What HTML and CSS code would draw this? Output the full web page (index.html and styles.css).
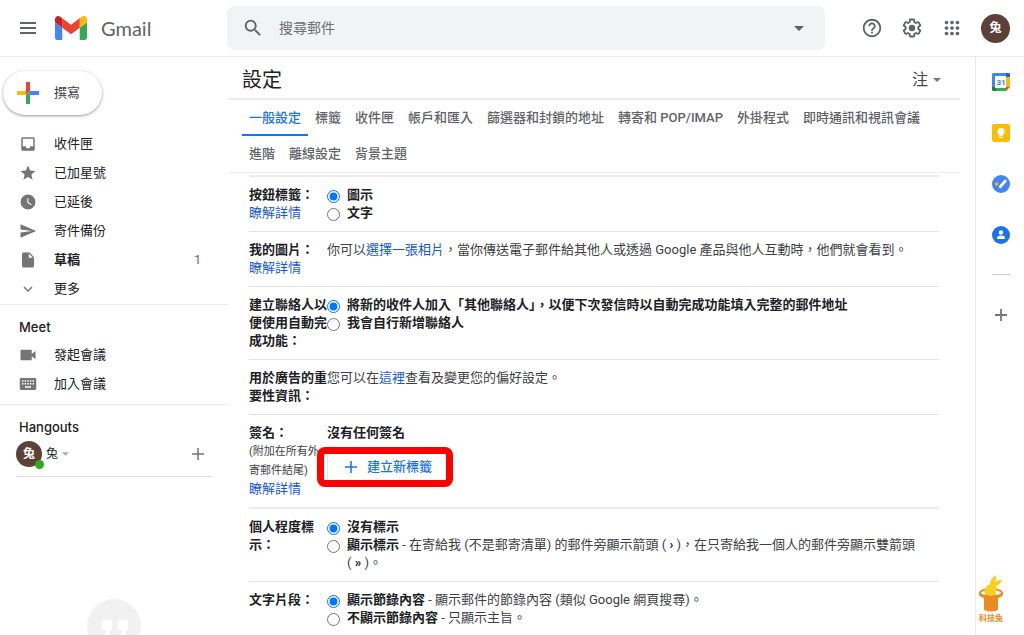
FILE: index.html
```html
<!DOCTYPE html>
<html lang="zh-Hant">
<head>
<meta charset="utf-8">
<meta name="viewport" content="width=device-width, initial-scale=1">
<title>Gmail 設定</title>
<link rel="stylesheet" href="styles.css">
</head>
<body>
<header class="topbar">
  <div class="brand">
    <button class="icon-btn" aria-label="主選單"><svg width="18" height="14" viewBox="0 0 18 14" fill="none" stroke="#5f6368" stroke-width="2"><path d="M1 2h16M1 7h16M1 12h16"/></svg></button>
    <a class="logo" href="#">
      <svg width="32" height="24" viewBox="52 42 88 66" aria-hidden="true"><path fill="#4285f4" d="M58 108h14V74L52 59v43c0 3.320 2.690 6 6 6"/><path fill="#34a853" d="M120 108h14c3.320 0 6-2.690 6-6V59l-20 15"/><path fill="#fbbc04" d="M120 48v26l20-15v-8c0-7.420-8.470-11.650-14.400-7.200"/><path fill="#ea4335" d="M72 74V48l24 18 24-18v26L96 92"/><path fill="#c5221f" d="M52 51v8l20 15V48l-5.600-4.200c-5.940-4.450-14.400-.220-14.400 7.200"/></svg>
      <span>Gmail</span>
    </a>
  </div>
  <form class="search" role="search">
    <button class="icon-btn" type="button" aria-label="搜尋"><svg width="22" height="22" viewBox="0 0 24 24" fill="#5f6368"><path d="M15.500 14h-.790l-.280-.270A6.470 6.470 0 0 0 16 9.500 6.500 6.500 0 1 0 9.500 16c1.610 0 3.090-.590 4.230-1.570l.270.280v.790l5 4.990L20.490 19l-4.990-5zm-6 0C7.010 14 5 11.990 5 9.500S7.010 5 9.500 5 14 7.010 14 9.500 11.990 14 9.500 14z"/></svg></button>
    <input type="text" placeholder="搜尋郵件" aria-label="搜尋郵件">
    <button class="icon-btn" type="button" aria-label="顯示搜尋選項"><svg width="10" height="5" viewBox="0 0 10 5" fill="#5f6368"><path d="M0 0h10L5 5z"/></svg></button>
  </form>
  <div class="tools">
    <button class="icon-btn" aria-label="說明"><svg width="22" height="22" viewBox="0 0 24 24" fill="#5f6368"><path d="M11 18h2v-2h-2v2zm1-16C6.480 2 2 6.480 2 12s4.480 10 10 10 10-4.480 10-10S17.520 2 12 2zm0 18c-4.410 0-8-3.590-8-8s3.590-8 8-8 8 3.590 8 8-3.590 8-8 8zm0-14c-2.210 0-4 1.790-4 4h2c0-1.100.900-2 2-2s2 .900 2 2c0 2-3 1.750-3 5h2c0-2.250 3-2.500 3-5 0-2.210-1.790-4-4-4z"/></svg></button>
    <button class="icon-btn" aria-label="設定"><svg width="22" height="22" viewBox="0 0 24 24" fill="#5f6368"><path d="M13.850 22.250h-3.700c-.740 0-1.360-.540-1.450-1.270l-.270-1.890c-.270-.140-.530-.290-.790-.460l-1.800.720c-.700.260-1.470-.030-1.810-.650L2.200 15.530c-.350-.660-.200-1.440.360-1.880l1.530-1.190c-.010-.150-.020-.300-.020-.460 0-.150.010-.310.020-.460l-1.520-1.190c-.590-.450-.740-1.260-.370-1.880l1.850-3.190c.340-.620 1.110-.900 1.790-.630l1.810.730c.260-.170.520-.320.780-.460l.270-1.910c.090-.700.710-1.250 1.440-1.250h3.700c.740 0 1.360.540 1.450 1.270l.270 1.890c.270.140.530.290.790.460l1.800-.720c.710-.260 1.480.030 1.820.650l1.840 3.180c.360.660.200 1.440-.360 1.880l-1.520 1.190c.010.150.020.300.020.460s-.010.310-.020.460l1.520 1.190c.560.450.720 1.230.370 1.860l-1.860 3.220c-.340.620-1.110.900-1.800.630l-1.800-.720c-.260.170-.520.320-.780.460l-.270 1.910c-.100.680-.720 1.220-1.460 1.220zm-3.230-2h2.760l.370-2.550.530-.220c.440-.180.880-.440 1.340-.780l.450-.340 2.380.960 1.380-2.400-2.030-1.580.070-.560c.030-.260.060-.510.060-.780s-.030-.530-.060-.780l-.070-.560 2.030-1.580-1.390-2.400-2.390.960-.450-.350c-.420-.320-.870-.580-1.330-.770l-.520-.220-.370-2.550h-2.760l-.370 2.550-.530.210c-.440.190-.880.440-1.340.790l-.450.330-2.380-.950-1.390 2.390 2.030 1.580-.070.560a7 7 0 0 0-.060.790c0 .260.020.530.060.780l.070.560-2.030 1.580 1.380 2.400 2.390-.960.450.350c.430.330.860.580 1.330.770l.530.220z"/><circle cx="12" cy="12" r="3.500"/></svg></button>
    <button class="icon-btn" aria-label="Google 應用程式"><svg width="22" height="22" viewBox="0 0 24 24" fill="#5f6368"><path d="M6 8c1.100 0 2-.900 2-2s-.900-2-2-2-2 .900-2 2 .900 2 2 2zm6 12c1.100 0 2-.900 2-2s-.900-2-2-2-2 .900-2 2 .900 2 2 2zm-6 0c1.100 0 2-.900 2-2s-.900-2-2-2-2 .900-2 2 .900 2 2 2zm0-6c1.100 0 2-.900 2-2s-.900-2-2-2-2 .900-2 2 .900 2 2 2zm6 0c1.100 0 2-.900 2-2s-.900-2-2-2-2 .900-2 2 .900 2 2 2zm4-8c0 1.100.900 2 2 2s2-.900 2-2-.900-2-2-2-2 .900-2 2zm-4 2c1.100 0 2-.900 2-2s-.900-2-2-2-2 .900-2 2 .900 2 2 2zm6 6c1.100 0 2-.900 2-2s-.900-2-2-2-2 .900-2 2 .900 2 2 2zm0 6c1.100 0 2-.900 2-2s-.900-2-2-2-2 .900-2 2 .900 2 2 2z"/></svg></button>
    <button class="avatar" aria-label="帳戶">兔</button>
  </div>
</header>

<div class="body">
  <nav class="sidebar">
    <button class="compose"><svg width="22" height="22" viewBox="0 0 22 22"><path fill="#ea4335" d="M9 0h4v9l-4 4z"/><path fill="#fbbc04" d="M0 9h9v4H0z"/><path fill="#4285f4" d="M13 9h9v4h-9l-2-2z"/><path fill="#34a853" d="M9 13l2-2 2 2v9H9z"/></svg>撰寫</button>
    <ul class="nav-list">
      <li><a href="#"><svg viewBox="0 0 24 24"><path d="M19 3H5c-1.100 0-2 .900-2 2v14c0 1.100.900 2 2 2h14c1.100 0 2-.900 2-2V5c0-1.100-.900-2-2-2zm0 12h-4c0 1.660-1.350 3-3 3s-3-1.340-3-3H5V5h14v10z"/></svg>收件匣</a></li>
      <li><a href="#"><svg viewBox="0 0 24 24"><path d="M12 17.270 18.180 21l-1.640-7.030L22 9.240l-7.190-.610L12 2 9.190 8.630 2 9.240l5.460 4.730L5.820 21z"/></svg>已加星號</a></li>
      <li><a href="#"><svg viewBox="0 0 24 24"><path fill-rule="evenodd" d="M12 2a10 10 0 1 0 0 20 10 10 0 0 0 0-20zm4.200 14.200L11 13V7h1.500v5.200l4.500 2.700-.800 1.300z"/></svg>已延後</a></li>
      <li><a href="#"><svg viewBox="0 0 24 24"><path d="M2 21 23 12 2 3v7l15 2-15 2z"/></svg>寄件備份</a></li>
      <li><a href="#" class="unread"><svg viewBox="0 0 24 24"><path d="M14 2H6c-1.100 0-2 .900-2 2v16c0 1.100.900 2 2 2h12c1.100 0 2-.900 2-2V8l-6-6zm-1 7V3.500L18.500 9H13z"/></svg>草稿<span class="count">1</span></a></li>
      <li><a href="#"><svg viewBox="0 0 24 24"><path d="m12 16-6-6 1.400-1.400 4.600 4.600 4.600-4.600L18 10z"/></svg>更多</a></li>
    </ul>
    <section class="group">
      <h2>Meet</h2>
      <ul class="nav-list">
        <li><a href="#"><svg viewBox="0 0 24 24"><path d="M17 10.500V6c0-.550-.450-1-1-1H3c-.550 0-1 .450-1 1v12c0 .550.450 1 1 1h13c.550 0 1-.450 1-1v-4.500l5 4v-11l-5 4z"/></svg>發起會議</a></li>
        <li><a href="#"><svg viewBox="0 0 24 24"><path fill-rule="evenodd" d="M21 4H3c-1.100 0-2 .900-2 2v12c0 1.100.900 2 2 2h18c1.100 0 2-.900 2-2V6c0-1.100-.900-2-2-2zM4 7h2v2H4zm3.500 0h2v2h-2zM11 7h2v2h-2zm3.500 0h2v2h-2zM18 7h2v2h-2zM4 10.500h2v2H4zm3.500 0h2v2h-2zm3.500 0h2v2h-2zm3.500 0h2v2h-2zm3.500 0h2v2h-2zM8 15h8v2H8z"/></svg>加入會議</a></li>
      </ul>
    </section>
    <section class="group">
      <h2>Hangouts</h2>
      <div class="chat-user">
        <span class="avatar avatar-small">兔<i class="presence"></i></span>
        <button class="chat-name">兔<svg width="7" height="4" viewBox="0 0 10 5" fill="#aaa"><path d="M0 0h10L5 5z"/></svg></button>
        <button class="icon-btn" aria-label="新對話"><svg width="12" height="12" viewBox="0 0 12 12" fill="none" stroke="#777" stroke-width="1.500"><path d="M6 0v12M0 6h12"/></svg></button>
      </div>
      <svg class="empty-chat" width="54" height="54" viewBox="0 0 54 54"><circle cx="27" cy="27" r="27" fill="#f1f1f1"/><path fill="#fff" d="M15 21h10v9l-4 7h-4l3-6h-5zM31 21h10v9l-4 7h-4l3-6h-5z"/></svg>
    </section>
  </nav>

  <main class="settings">
    <div class="title-row">
      <h1>設定</h1>
      <button class="input-tool">注<svg width="8" height="4" viewBox="0 0 10 5" fill="#777"><path d="M0 0h10L5 5z"/></svg></button>
    </div>
    <nav class="tabs">
      <a class="active" href="#">一般設定</a><a href="#">標籤</a><a href="#">收件匣</a><a href="#">帳戶和匯入</a><a href="#">篩選器和封鎖的地址</a><a href="#">轉寄和 POP/IMAP</a><a href="#">外掛程式</a><a href="#">即時通訊和視訊會議</a><a href="#">進階</a><a href="#">離線設定</a><a href="#">背景主題</a>
    </nav>
    <form class="options">
      <section class="row">
        <div class="name"><b>按鈕標籤：</b><a href="#">瞭解詳情</a></div>
        <div>
          <label class="choice"><input type="radio" name="labels" checked><span><b>圖示</b></span></label>
          <label class="choice"><input type="radio" name="labels"><span><b>文字</b></span></label>
        </div>
      </section>
      <section class="row">
        <div class="name"><b>我的圖片：</b><a href="#">瞭解詳情</a></div>
        <div>你可以<a href="#">選擇一張相片</a>，當你傳送電子郵件給其他人或透過 Google 產品與他人互動時，他們就會看到。</div>
      </section>
      <section class="row">
        <div class="name"><b>建立聯絡人以便使用自動完成功能：</b></div>
        <div>
          <label class="choice"><input type="radio" name="contacts" checked><span><b>將新的收件人加入「其他聯絡人」，以便下次發信時以自動完成功能填入完整的郵件地址</b></span></label>
          <label class="choice"><input type="radio" name="contacts"><span><b>我會自行新增聯絡人</b></span></label>
        </div>
      </section>
      <section class="row">
        <div class="name"><b>用於廣告的重要性資訊：</b></div>
        <div>您可以在<a href="#">這裡</a>查看及變更您的偏好設定。</div>
      </section>
      <section class="row row-thick">
        <div class="name"><b>簽名：</b><small>(附加在所有外寄郵件結尾)</small><a href="#">瞭解詳情</a></div>
        <div>
          <b>沒有任何簽名</b>
          <div class="create">
            <button type="button"><svg width="12" height="12" viewBox="0 0 12 12" fill="none" stroke="#1a73e8" stroke-width="1.500"><path d="M6 0v12M0 6h12"/></svg>建立新標籤</button>
            <span class="highlight"></span>
          </div>
        </div>
      </section>
      <section class="row">
        <div class="name"><b>個人程度標示：</b></div>
        <div>
          <label class="choice"><input type="radio" name="level" checked><span><b>沒有標示</b></span></label>
          <label class="choice"><input type="radio" name="level"><span><b>顯示標示</b> - 在寄給我 (不是郵寄清單) 的郵件旁顯示箭頭 ( <b>›</b> )，在只寄給我一個人的郵件旁顯示雙箭頭 <span class="keep">( <b>»</b> )。</span></span></label>
        </div>
      </section>
      <section class="row">
        <div class="name"><b>文字片段：</b></div>
        <div>
          <label class="choice"><input type="radio" name="snippet" checked><span><b>顯示節錄內容</b> - 顯示郵件的節錄內容 (類似 Google 網頁搜尋)。</span></label>
          <label class="choice"><input type="radio" name="snippet"><span><b>不顯示節錄內容</b> - 只顯示主旨。</span></label>
        </div>
      </section>
    </form>
  </main>

  <aside class="addons">
    <a href="#" aria-label="日曆"><svg width="18" height="18" viewBox="0 0 18 18"><path fill="#4285f4" d="M1 0h13v4H4v10H0V1z"/><path fill="#1967d2" d="M14 0h3l1 1v3h-4z"/><path fill="#fbbc04" d="M14 4h4v10h-4z"/><path fill="#34a853" d="M4 14h10v4H4z"/><path fill="#188038" d="M0 14h4v4H1l-1-1z"/><path fill="#ea4335" d="M14 14h4l-4 4z"/><path fill="#fff" d="M3 3h11v12H3z"/><text x="9" y="12" text-anchor="middle" class="cal-day">31</text></svg></a>
    <a href="#" aria-label="Keep"><svg width="18" height="18" viewBox="0 0 18 18"><rect width="18" height="18" rx="2" fill="#fbbc04"/><circle cx="9" cy="7.500" r="3.500" fill="#fff"/><path fill="#fff" d="M7 10h4v2H7zM7 12.700h4V14H7z"/></svg></a>
    <a href="#" aria-label="Tasks"><svg width="18" height="18" viewBox="0 0 18 18"><circle cx="9" cy="9" r="9" fill="#4285f4"/><path d="m8.200 11.800 5-5.800" stroke="#fff" stroke-width="2.800" stroke-linecap="round"/><circle cx="4.700" cy="9" r="1.800" fill="#fbbc04"/></svg></a>
    <a href="#" aria-label="聯絡人"><svg width="18" height="18" viewBox="0 0 18 18"><circle cx="9" cy="9" r="9" fill="#1a73e8"/><circle cx="9" cy="6.500" r="2.200" fill="#fff"/><path fill="#fff" d="M5 13v-1.200c0-1.600 2-2.300 4-2.300s4 .700 4 2.300V13z"/></svg></a>
    <hr>
    <button class="icon-btn" aria-label="取得外掛程式"><svg width="12" height="12" viewBox="0 0 12 12" fill="none" stroke="#777" stroke-width="1.800"><path d="M6 0v12M0 6h12"/></svg></button>
  </aside>
</div>

<div class="watermark">
  <svg width="26" height="38" viewBox="0 0 26 38"><ellipse cx="13" cy="18" rx="11" ry="4" fill="#fff" stroke="#e98a24" stroke-width="2"/><path fill="#e98a24" d="M6 20h14v15q-7 3-14 0z"/><path fill="#f8cf1c" d="M7 20c-1-7 1-9 5-11 0-4 3-7 6-9 0 3 0 5-1 7 2-2 4-2 7-2-1 3-3 5-6 6 2 3 0 5-1 5l2 4q-6 2-12 0z"/><path fill="#e98a24" d="M1 18q12 6 24 0v2q-2 3-6 3H7q-4 0-6-3z"/></svg>
  <span>科技兔</span>
</div>
</body>
</html>
```

FILE: styles.css
```css
* { box-sizing: border-box; }

body {
  margin: 0;
  height: 100vh;
  overflow: hidden;
  display: flex;
  flex-direction: column;
  background: #fff;
  color: #202124;
  font: 13px/18px Roboto, "Noto Sans CJK TC", sans-serif;
}

a { color: #1558d6; text-decoration: none; }
b { font-weight: 700; }
h1, h2, ul { margin: 0; padding: 0; }
ul { list-style: none; }
svg { display: block; flex: none; }

button {
  border: 0;
  padding: 0;
  background: none;
  color: inherit;
  font: inherit;
  cursor: pointer;
}

.icon-btn { display: flex; align-items: center; justify-content: center; }

/* Top bar */
.topbar {
  flex: none;
  display: flex;
  align-items: center;
  height: 57px;
  border-bottom: 1px solid #e8eaed;
}
.brand { flex: none; width: 227px; display: flex; align-items: center; gap: 18px; padding-left: 19px; }
.logo { display: flex; align-items: center; gap: 14px; color: #5f6368; font: 20px/24px Lato, sans-serif; }
.search {
  flex: 1;
  max-width: 598px;
  height: 44px;
  display: flex;
  align-items: center;
  gap: 15px;
  padding: 0 21px 0 15px;
  border-radius: 7px;
  background: #f1f3f4;
}
.search input {
  flex: 1;
  min-width: 0;
  padding: 0;
  border: 0;
  outline: 0;
  background: none;
  color: #202124;
  font: 14px/20px Roboto, "Noto Sans CJK TC", sans-serif;
}
.search input::placeholder { color: #6b6f73; opacity: 1; }
.tools { margin-left: auto; display: flex; align-items: center; gap: 18px; padding-right: 14px; }
.avatar {
  position: relative;
  display: flex;
  align-items: center;
  justify-content: center;
  width: 29px;
  height: 29px;
  border-radius: 50%;
  background: #5d4037;
  color: #fff;
  font-size: 12px;
  font-weight: 700;
}

.body { flex: 1; min-height: 0; display: flex; }

/* Left navigation */
.sidebar { flex: none; width: 228px; overflow: hidden; }
.compose {
  display: flex;
  align-items: center;
  gap: 15px;
  height: 44px;
  margin: 14px 0 14px 3px;
  padding: 0 22px 0 14px;
  border-radius: 22px;
  box-shadow: 0 1px 2px rgba(60, 64, 67, .35), 0 1px 3px 1px rgba(60, 64, 67, .15);
  color: #3c4043;
}
.nav-list { padding-bottom: 1px; }
.nav-list a {
  display: flex;
  align-items: center;
  gap: 17px;
  height: 29px;
  padding: 0 27px 0 19px;
  color: #202124;
}
.nav-list svg { width: 18px; height: 18px; fill: #757575; }
.nav-list .unread { font-weight: 700; }
.count { margin-left: auto; font-size: 12px; font-weight: 400; color: #5f6368; }
.group { margin-bottom: 5px; border-top: 1px solid #e8eaed; padding-top: 13px; }
.group h2 {
  padding: 0 19px;
  margin-bottom: 4px;
  font: 500 13px/18px Inter, sans-serif;
}
.chat-user {
  display: flex;
  align-items: center;
  gap: 4px;
  height: 37px;
  margin: 0 15px 0 16px;
  padding: 0 9px 9px 0;
  border-bottom: 1px solid #e0e0e0;
}
.chat-user .icon-btn { margin-left: auto; }
.avatar-small { width: 26px; height: 26px; }
.presence {
  position: absolute;
  right: -2px;
  bottom: -2px;
  width: 9px;
  height: 9px;
  border-radius: 50%;
  background: #34a81c;
}
.chat-name { display: flex; align-items: center; gap: 4px; font-size: 12px; }
.empty-chat { margin: 122px auto 0; }

/* Settings */
.settings { flex: 1; min-width: 0; overflow: hidden; padding-right: 15px; }
.title-row {
  display: flex;
  align-items: center;
  justify-content: space-between;
  height: 43px;
  padding: 4px 19px 0 14px;
  border-bottom: 2px solid #ededed;
}
h1 { font-size: 20px; line-height: 28px; font-weight: 400; }
.input-tool { display: flex; align-items: center; gap: 5px; font-size: 16px; line-height: 24px; color: #444; }
.tabs { display: flex; flex-wrap: wrap; padding: 0 14px; border-bottom: 1px solid #ececec; }
.tabs a {
  height: 36px;
  padding: 0 7px;
  line-height: 36px;
  border-bottom: 2px solid transparent;
  color: #5f6368;
  font-weight: 500;
}
.tabs .active { color: #1a73e8; border-color: #1a73e8; }
.options { margin: 2px 21px 0; border-top: 2px solid #ececec; color: #3c4043; }
.options b { color: #202124; }
.row {
  display: grid;
  grid-template-columns: 78px 1fr;
  padding: 9px 0;
  border-bottom: 1px solid #e4e4e4;
}
.row-thick { border-bottom: 2px solid #ececec; }
.name b, .name small, .name a { display: block; }
.name small { font-size: 11px; line-height: 19px; }
.choice { display: flex; align-items: flex-start; gap: 7px; }
.choice input { flex: none; width: 13px; height: 13px; margin: 4px 0 0; }
.keep { white-space: nowrap; }
.create { position: relative; width: 117px; margin-top: 12px; }
.create button {
  display: flex;
  align-items: center;
  gap: 10px;
  height: 26px;
  width: 100%;
  padding-left: 17px;
  border-left: 1px solid #e4e4e4;
  color: #1a73e8;
  font-weight: 500;
}
.highlight {
  position: absolute;
  inset: -7px -9px -7px -10px;
  border: 7px solid #f00;
  border-radius: 8px;
  pointer-events: none;
}

/* Right add-on strip */
.addons {
  flex: none;
  width: 49px;
  display: flex;
  flex-direction: column;
  align-items: center;
  gap: 33px;
  padding: 16px 0 0 2px;
  border-left: 1px solid #e8eaed;
}
.addons hr { width: 18px; margin: -3px 0 1px; border: 0; border-top: 1px solid #ccc; }
.cal-day { font: 700 8px Roboto, sans-serif; fill: #4285f4; }

.watermark {
  position: absolute;
  right: 20px;
  bottom: 11px;
  display: flex;
  flex-direction: column;
  align-items: center;
  color: #e98a24;
  font-size: 8px;
  line-height: 11px;
  font-weight: 700;
}
```
